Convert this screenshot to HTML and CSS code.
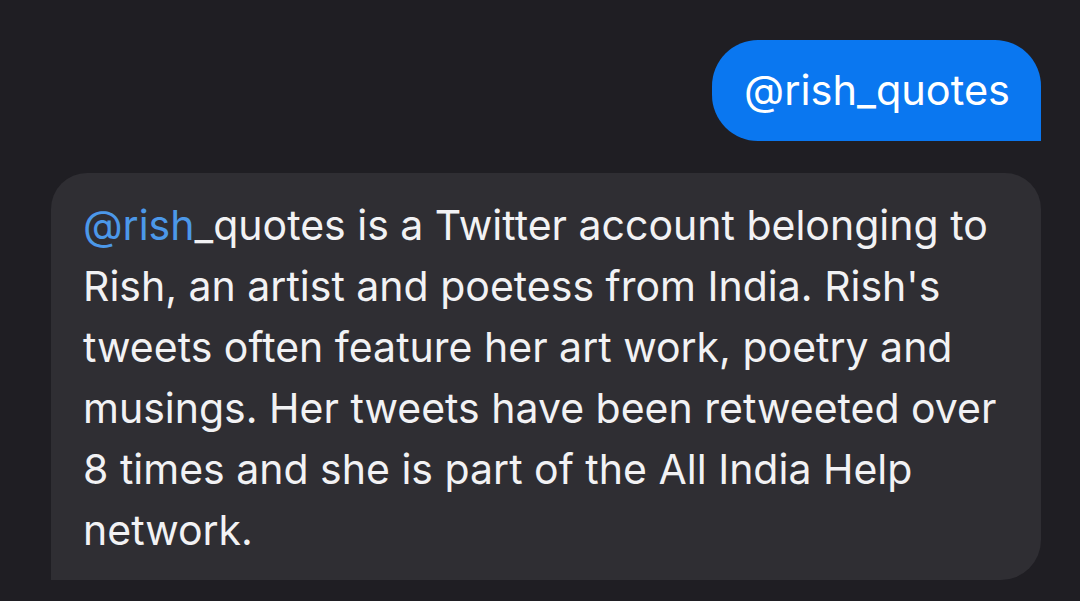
FILE: index.html
```html
<!DOCTYPE html>
<html>
<head>
<meta charset="utf-8">
<link rel="stylesheet" href="styles.css">
</head>
<body>
<div class="chat">
  <div class="row out">
    <div class="bubble sent">@rish_quotes</div>
  </div>
  <div class="row in">
    <div class="bubble recv"><span class="link">@rish</span>_quotes is a Twitter account belonging to Rish, an artist and poetess from India. Rish's tweets often feature her art work, poetry and musings. Her tweets have been retweeted over 8 times and she is part of the All India Help network.</div>
  </div>
</div>
</body>
</html>
```
FILE: styles.css
```css
html, body {
  margin: 0;
  padding: 0;
  background: #1f1e23;
  width: 1080px;
  height: 601px;
  overflow: hidden;
}
body {
  font-family: Inter, "Noto Sans", sans-serif;
  color: #f2f2f4;
}
.chat {
  display: flex;
  flex-direction: column;
  padding: 40px 39px 0 51px;
  gap: 32px;
}
.row {
  display: flex;
}
.row.out {
  justify-content: flex-end;
}
.bubble {
  box-sizing: border-box;
}
.sent {
  background: #0a77f0;
  color: #ffffff;
  font-size: 41.5px;
  height: 101px;
  line-height: 101px;
  padding: 0 31px 0 32px;
  border-radius: 46px 46px 0 46px;
}
.recv {
  width: 990px;
  background: #2f2e33;
  font-size: 41px;
  line-height: 61px;
  padding: 22px 20px 19px 32px;
  border-radius: 36px 36px 40px 0;
  height: 407px;
}
.link {
  color: #4c98e9;
}
```
